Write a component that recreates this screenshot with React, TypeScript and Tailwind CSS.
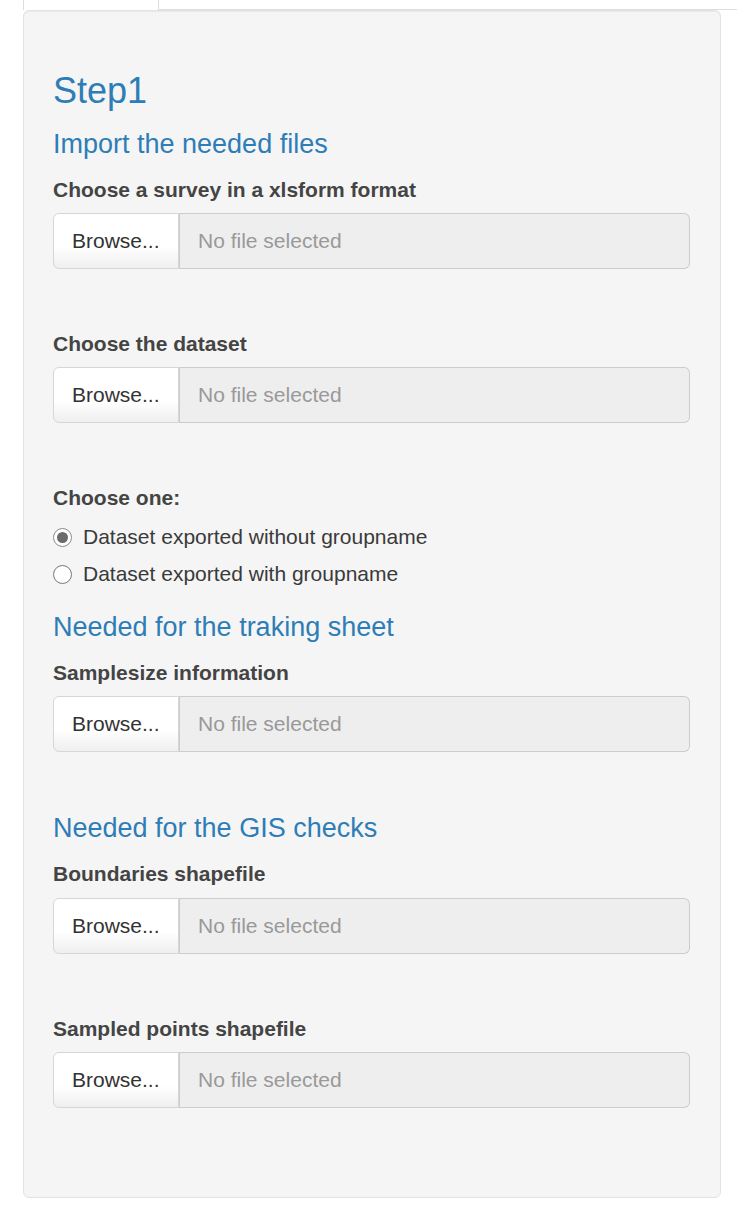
import React from "react";

function FileInput({ label, top, gap }: { label: string; top: number; gap: number }) {
  return (
    <div style={{ marginTop: top }}>
      <div className="text-[21px] leading-[30px] font-bold text-[#444]">{label}</div>
      <div className="flex h-[56px]" style={{ marginTop: gap }}>
        <div className="w-[126px] h-full rounded-l-[6px] border border-[#d6d6d6] bg-gradient-to-b from-white from-60% to-[#efefef] flex items-center pl-[18px] text-[21px] text-[#333]">
          Browse...
        </div>
        <div className="flex-1 h-full rounded-r-[6px] border border-l-0 border-[#cccccc] bg-[#eeeeee] flex items-center pl-[18px] text-[21px] text-[#999]">
          <span className="border-l border-[#cccccc] h-full -ml-[18px] mr-[18px]"></span>
          No file selected
        </div>
      </div>
    </div>
  );
}

function Radio({ checked, label, top }: { checked: boolean; label: string; top: number }) {
  return (
    <div className="flex items-center h-[30px]" style={{ marginTop: top }}>
      <div
        className={
          "w-[19px] h-[19px] rounded-full border bg-white flex items-center justify-center " +
          (checked ? "border-[#8a8a8a]" : "border-[#767676]")
        }
      >
        {checked && <div className="w-[11px] h-[11px] rounded-full bg-[#6b6b6b]" />}
      </div>
      <span className="ml-[11px] text-[21px] text-[#3a3a3a]">{label}</span>
    </div>
  );
}

export default function App() {
  return (
    <div className="w-[737px] min-h-[1210px] bg-white font-['Liberation_Sans',Arial,sans-serif]">
      <div className="flex h-[10px]">
        <div className="w-[23px]" />
        <div className="w-[136px] h-full bg-white border-x border-[#dddddd]" />
        <div className="flex-1 h-full border-b border-[#dddddd]" />
      </div>
      <div className="ml-[23px] w-[698px] h-[1188px] rounded-[6px] border border-[#e3e3e3] bg-[#f5f5f5] shadow-[inset_0_1px_1px_rgba(0,0,0,0.05)] pl-[29px] pr-[30px] pt-[60px]">
        <div className="text-[36px] leading-[40px] text-[#2e7db6]">Step1</div>
        <div className="mt-[18px] text-[27px] leading-[30px] text-[#2e7db6]">Import the needed files</div>
        <FileInput label="Choose a survey in a xlsform format" top={16} gap={8} />
        <FileInput label="Choose the dataset" top={60} gap={8} />
        <div className="mt-[60px] text-[21px] leading-[30px] font-bold text-[#444]">Choose one:</div>
        <Radio checked label="Dataset exported without groupname" top={9} />
        <Radio checked={false} label="Dataset exported with groupname" top={7} />
        <div className="mt-[23px] text-[27px] leading-[30px] text-[#2e7db6]">Needed for the traking sheet</div>
        <FileInput label="Samplesize information" top={16} gap={8} />
        <div className="mt-[61px] text-[27px] leading-[30px] text-[#2e7db6]">Needed for the GIS checks</div>
        <FileInput label="Boundaries shapefile" top={16} gap={9} />
        <FileInput label="Sampled points shapefile" top={60} gap={8} />
      </div>
    </div>
  );
}
